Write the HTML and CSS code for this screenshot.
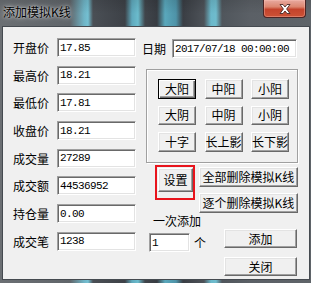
FILE: index.html
```html
<!DOCTYPE html>
<html lang="zh-CN">
<head>
  <meta charset="UTF-8">
  <title>添加模拟K线</title>
  <link rel="stylesheet" href="styles.css">
</head>
<body>
  <div class="window">
    <div class="titlebar">
      <span class="title">添加模拟K线</span>
      <span class="close">
        <svg width="12" height="10" viewBox="0 0 12 10">
          <path d="M1 0.5 L4 0.5 L6 3 L8 0.5 L11 0.5 L7.6 5 L11 9.5 L8 9.5 L6 7 L4 9.5 L1 9.5 L4.4 5 Z" fill="#fff" stroke="#4a2a28" stroke-width="0.9" stroke-linejoin="round"/>
        </svg>
      </span>
    </div>

    <div class="client">
      <!-- 左側の価格入力 -->
      <div class="fields">
        <div class="field"><label>开盘价</label><input class="box" value="17.85"></div>
        <div class="field"><label>最高价</label><input class="box" value="18.21"></div>
        <div class="field"><label>最低价</label><input class="box" value="17.81"></div>
        <div class="field"><label>收盘价</label><input class="box" value="18.21"></div>
        <div class="field"><label>成交量</label><input class="box" value="27289"></div>
        <div class="field"><label>成交额</label><input class="box" value="44536952"></div>
        <div class="field"><label>持仓量</label><input class="box" value="0.00"></div>
        <div class="field"><label>成交笔</label><input class="box" value="1238"></div>
      </div>

      <div class="side">
        <div class="date-row">
          <label>日期</label>
          <input class="box date" value="2017/07/18 00:00:00">
        </div>

        <div class="group">
          <div class="kbuttons">
            <button class="btn default">大阳</button>
            <button class="btn">中阳</button>
            <button class="btn">小阳</button>
            <button class="btn">大阴</button>
            <button class="btn">中阴</button>
            <button class="btn">小阴</button>
            <button class="btn">十字</button>
            <button class="btn">长上影</button>
            <button class="btn">长下影</button>
          </div>
        </div>

        <div class="action-row">
          <div class="mark"><button class="btn set">设置</button></div>
          <div class="delete-col">
            <button class="btn wide">全部删除模拟K线</button>
            <button class="btn wide">逐个删除模拟K线</button>
          </div>
        </div>

        <div class="once">一次添加</div>

        <div class="add-row">
          <input class="box count" value="1">
          <span class="unit">个</span>
          <div class="add-col">
            <button class="btn big">添加</button>
            <button class="btn big">关闭</button>
          </div>
        </div>
      </div>
    </div>
  </div>
</body>
</html>
```

FILE: styles.css
```css
* {
  margin: 0;
  padding: 0;
  box-sizing: border-box;
}

body {
  font-family: "Noto Sans CJK SC", sans-serif;
  font-size: 12px;
  color: #000;
}

.window {
  width: 311px;
  height: 283px;
  overflow: hidden;
  background:
    linear-gradient(180deg, rgba(0, 0, 0, 0.1) 0, rgba(0, 0, 0, 0) 14px),
    linear-gradient(90deg,
      #6b6f73 0, #60656a 70px, #6fb4c6 84px, #74c0d2 88px, #4a4f55 93px,
      #3d4147 125px, #5fa9bd 132px, #6bbccd 138px, #40454b 145px,
      #383c42 157px, #5aa8bc 165px, #4e93a8 176px, #3a3e44 183px,
      #4d5258 204px, #6bb9cb 211px, #6fbccd 216px, #50565c 222px,
      #5b6066 250px, #5f6469 311px);
}

/* タイトルバー */
.titlebar {
  height: 26px;
  display: flex;
  justify-content: space-between;
}

.title {
  padding: 4px 0 0 3px;
  font-size: 12px;
  line-height: 16px;
  text-shadow: 0 0 5px rgba(255, 255, 255, 0.8), 0 0 2px rgba(255, 255, 255, 0.6);
}

.close {
  width: 43px;
  height: 18px;
  margin-right: 5px;
  display: flex;
  align-items: center;
  justify-content: center;
  border: 1px solid #4b2424;
  border-top: none;
  border-radius: 0 0 4px 4px;
  background: linear-gradient(180deg, #e8aaa0 0, #dc8670 40%, #c4432c 55%, #cc5236 100%);
  box-shadow: inset 0 0 0 1px rgba(255, 200, 190, 0.35);
}

/* クライアント領域 */
.client {
  margin-left: 2px;
  width: 308px;
  height: 254px;
  display: flex;
  background-color: #f0f0f0;
  border: 1px solid #454a50;
}

.fields {
  width: 139px;
  padding: 11px 0 0 10px;
  display: flex;
  flex-direction: column;
  gap: 8.7px;
}

.field {
  display: flex;
  align-items: center;
  height: 19px;
}

.field label {
  width: 44px;
  line-height: 19px;
}

.box {
  height: 19px;
  padding: 0 0 0 2px;
  border: 1px solid;
  border-color: #a0a0a0 #fff #fff #a0a0a0;
  box-shadow: inset 1px 1px #696969, inset -1px -1px #e3e3e3;
  background-color: #fff;
  font-family: "Liberation Mono", monospace;
  font-size: 11px;
  letter-spacing: -0.6px;
  color: #000;
  outline: none;
}

.field .box {
  width: 79px;
}

.side {
  padding-top: 12px;
  display: flex;
  flex-direction: column;
}

.date-row {
  display: flex;
  align-items: center;
  height: 19px;
}

.date-row label {
  width: 30px;
  line-height: 19px;
}

.date {
  width: 125px;
}

.group {
  width: 152px;
  height: 94px;
  margin: 11px 0 0 4px;
  padding: 9px 0 0 11px;
  border: 1px solid #a0a0a0;
  box-shadow: inset 1px 1px #fff, 1px 1px #fff;
}

.kbuttons {
  display: grid;
  grid-template-columns: repeat(3, 38px);
  grid-auto-rows: 19.5px;
  column-gap: 8.5px;
  row-gap: 7px;
}

/* ボタン */
.btn {
  padding: 0;
  font-family: "Noto Sans CJK SC", sans-serif;
  font-size: 12px;
  line-height: 1;
  color: #000;
  white-space: nowrap;
  background-color: #f0f0f0;
  border: 1px solid;
  border-color: #fff #696969 #696969 #fff;
  box-shadow: inset -1px -1px #a0a0a0, inset 1px 1px #e3e3e3;
}

.btn.default {
  border-color: #000;
  box-shadow: inset 1px 1px #fff, inset -1px -1px #696969, inset -2px -2px #a0a0a0;
}

.action-row {
  display: flex;
  margin-top: 2px;
}

.mark {
  width: 40px;
  height: 35px;
  margin-left: 13px;
  padding: 1px 0 0 1px;
  border: 2px solid #e8141c;
}

.set {
  width: 35px;
  height: 24px;
}

.delete-col {
  margin: 2px 0 0 4px;
  display: flex;
  flex-direction: column;
  gap: 6px;
}

.wide {
  width: 99px;
  height: 20px;
}

.once {
  margin-left: 11px;
  height: 16px;
  line-height: 16px;
}

.add-row {
  display: flex;
}

.count {
  width: 41px;
  margin: 4px 0 0 7px;
}

.unit {
  width: 12px;
  margin: 4px 0 0 4px;
  line-height: 19px;
}

.add-col {
  margin-left: 18px;
  display: flex;
  flex-direction: column;
  gap: 9px;
}

.big {
  width: 73px;
  height: 19px;
}
```
